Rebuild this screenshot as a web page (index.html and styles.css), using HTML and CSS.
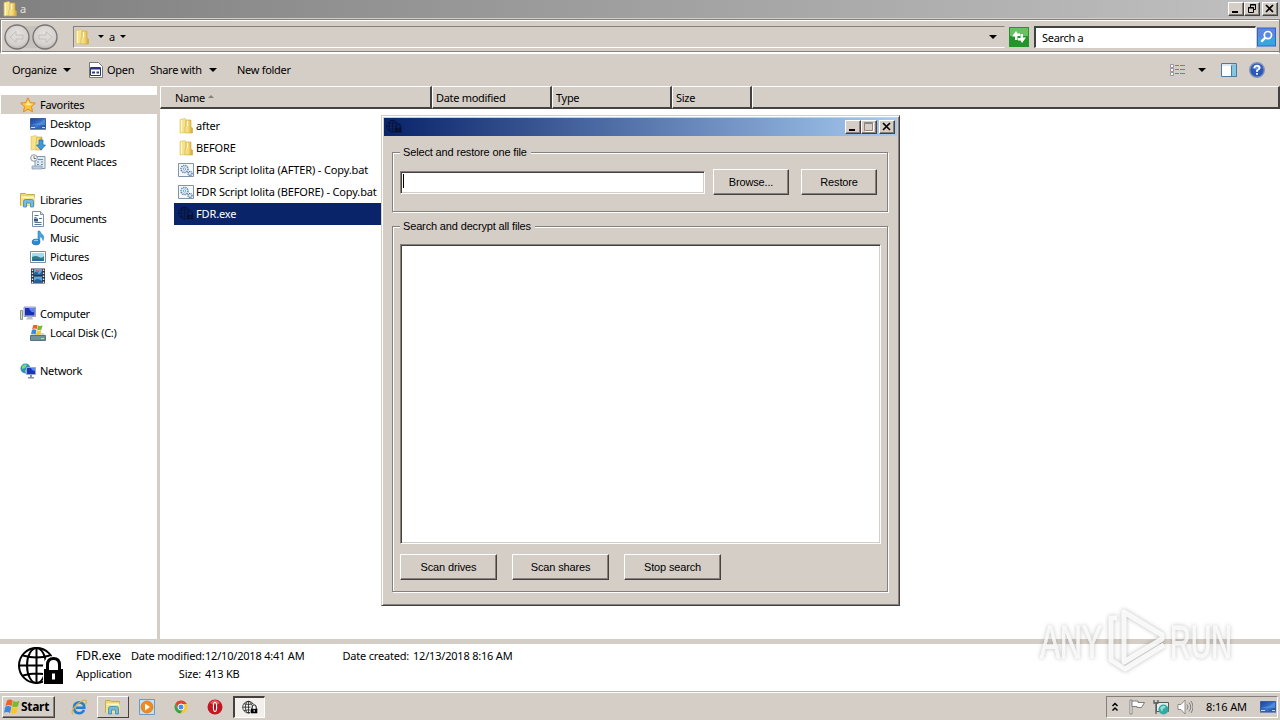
FILE: index.html
```html
<!DOCTYPE html>
<html lang="en">
<head>
    <meta charset="UTF-8">
    <meta name="viewport" content="width=device-width, initial-scale=1.0">
    <title>a</title>
    <link rel="stylesheet" href="styles.css">
</head>
<body>
    <!-- Shared icons -->
    <svg class="sprites" width="0" height="0">
        <defs>
            <linearGradient id="gold" x1="0" x2="1"><stop offset="0" stop-color="#f8e9a0"/><stop offset=".5" stop-color="#f0d570"/><stop offset="1" stop-color="#cfa631"/></linearGradient>
            <linearGradient id="blue" x1="0" y1="0" x2="1" y2="1"><stop offset="0" stop-color="#1c3f9c"/><stop offset=".6" stop-color="#3c78d0"/><stop offset="1" stop-color="#1c3f88"/></linearGradient>
            <radialGradient id="silver" cx=".5" cy=".4" r=".6"><stop offset="0" stop-color="#e8e5e1"/><stop offset=".75" stop-color="#d3d0cd"/><stop offset="1" stop-color="#b2b0ae"/></radialGradient>
        </defs>
        <symbol id="folder" viewBox="0 0 16 16">
            <path d="M2 1.500l5-1 1 1v13l-6 .5z" fill="#f5e28c" stroke="#dcbf55" stroke-width=".6"/>
            <path d="M8 2h5v7l1.500 1v5H7V9l1-1z" fill="url(#gold)" stroke="#cda93f" stroke-width=".6"/>
            <path d="M3.500 2v12M9.500 3v5" stroke="#fffbd8"/>
        </symbol>
        <symbol id="star" viewBox="0 0 16 16">
            <path d="M8 .8l2.200 4.700 5.100.6-3.800 3.500 1 5.200L8 12.200l-4.500 2.600 1-5.200L.7 6.100l5.100-.6z" fill="#fdc63d" stroke="#e08a24"/>
            <path d="M8 3.500l1.400 3 3 .4-4.400 1.600-3-1.600 2-.3z" fill="#fff0a0"/>
        </symbol>
        <symbol id="desktop" viewBox="0 0 16 16">
            <path d="M.5 2.500h15v10H.5z" fill="url(#blue)" stroke="#3a5e9c"/>
            <path d="M1 9l8-2 6-4v6z" fill="#5e9be6" opacity=".6"/>
            <path d="M0 13.500h16" stroke="#6f8db4"/>
            <path d="M1 11.500h4M12 11.500h3" stroke="#bfe0f5"/>
        </symbol>
        <symbol id="downloads" viewBox="0 0 16 16">
            <path d="M1 1.500l5-1 1 1v13l-6 .5z" fill="#f5e28c" stroke="#dcbf55" stroke-width=".6"/>
            <path d="M7 2h5v13H6V9z" fill="url(#gold)" stroke="#cda93f" stroke-width=".6"/>
            <path d="M9 5h4v5h2.500L11 15 6.500 10H9z" fill="#3c9be0" stroke="#1f69b0" stroke-width=".7"/>
        </symbol>
        <symbol id="recent" viewBox="0 0 16 16">
            <path d="M5 2.500h10v12H4l1-2z" fill="#dfe9f1" stroke="#8298ab"/>
            <path d="M8 5.500h5M7 8h2m2 0h2M7 10.500h2m2 0h2" stroke="#6e8ea9"/>
            <circle cx="4" cy="4" r="3.300" fill="#f5f7f8" stroke="#8d979f"/>
            <path d="M4 2v2.500h2" stroke="#555" fill="none" stroke-width=".8"/>
            <path d="M2 12h10v3H2z" fill="#bacddd" stroke="#8298ab" stroke-width=".7"/>
        </symbol>
        <symbol id="libraries" viewBox="0 0 16 16">
            <path d="M.5 3.500v-2h5l1 1h8v11H.5z" fill="#edd678" stroke="#c9ad48"/>
            <path d="M1.500 4.500h13v2h-13z" fill="#fff8cd"/>
            <path d="M1 6h14v8H1z" fill="#f6e18b"/>
            <path d="M3.500 15V9.500q0-2 2-2h6q2 0 2 2V15h-3v-4h-4v4z" fill="#74bbe1" stroke="#398bb8" stroke-width=".8"/>
        </symbol>
        <symbol id="document" viewBox="0 0 16 16">
            <path d="M2.500.5h8l3 3v12h-11z" fill="#fff" stroke="#7791ab"/>
            <path d="M10.500.5v3h3" fill="#d6e4ef" stroke="#7791ab"/>
            <path d="M4.500 4.500h4M4.500 6.500h2M9 7.500h3M4.500 11.500h7M4.500 13.500h7" stroke="#4f789f"/>
            <path d="M4 7.500h4v3H4z" fill="#35577f"/>
        </symbol>
        <symbol id="music" viewBox="0 0 16 16">
            <path d="M8 1h1.800q.4 2.500 3 4 1.800 1.500.2 5.500Q13 7.500 9.800 6.500V12H8z" fill="#43a5df" stroke="#287fbd" stroke-width=".6"/>
            <ellipse cx="6" cy="12" rx="4" ry="3" fill="#2d8ad2" stroke="#1f68a8" stroke-width=".6"/>
            <path d="M4 11q2-1.500 4-.5" stroke="#a9ddf7" fill="none"/>
        </symbol>
        <symbol id="picture" viewBox="0 0 16 16">
            <path d="M.5 2.500h15v11H.5z" fill="#fff" stroke="#7b8c9b"/>
            <path d="M2 4h12v8H2z" fill="#a4dbf2"/>
            <path d="M2 8q4-2 7 0t5-1v5H2z" fill="#2e8180"/>
            <path d="M2 11q5-2 12 0v1H2z" fill="#2f64a6"/>
        </symbol>
        <symbol id="video" viewBox="0 0 16 16">
            <path d="M1 .5h14v15H1z" fill="#273448"/>
            <path d="M4 1h8v6H4zM4 8.500h8V15H4z" fill="#5ba9d8"/>
            <path d="M4 5q3-3 4 0t4-2v4H4zM4 13q3-4 8 0v2H4z" fill="#28609a"/>
            <path d="M6 2h3v2H6z" fill="#c06c55"/>
            <path d="M2.500 1.500v14M13.500 1.500v14" stroke="#e8edf2" stroke-width="1.400" stroke-dasharray="1.500 1.500"/>
        </symbol>
        <symbol id="computer" viewBox="0 0 16 16">
            <path d="M.5 4.500h2v9h-2z" fill="#d9dfd1" stroke="#8b9784"/>
            <path d="M4 1h11.500v9.500H4z" fill="#c9d2e2" stroke="#7f8cab" stroke-width=".8"/>
            <path d="M5 2h9.500v7.500H5z" fill="#1b2fb4"/>
            <path d="M9 2h5.500v4q-4 1-5.500-4z" fill="#5d83ee"/>
            <path d="M8 10.500h4l1 3H6z" fill="#b9bfca"/>
        </symbol>
        <symbol id="flag" viewBox="0 0 16 16">
            <path d="M3 1.500q3-2 5.600 0L7.600 7Q5 5.200 1.500 7z" fill="#ee6128"/>
            <path d="M9.200 2q3 1.400 6.300-.2L14 7.200q-3 1.600-5.900.3z" fill="#7cb92f"/>
            <path d="M1.300 7.800q3-1.500 6 .2L6 14q-2.700-2-6-.3z" fill="#3a8ad5"/>
            <path d="M8 8.300q3 1.300 5.900-.2L12.500 13.700q-3 1.600-5.900.4z" fill="#f9c529"/>
        </symbol>
        <symbol id="disk" viewBox="0 0 16 16">
            <path d="M2.500 8h11l2 3H.5z" fill="#cbd6db"/>
            <path d="M.5 10.500h15v5H.5z" fill="#6f929e" stroke="#537480"/>
            <path d="M11 13.500h3" stroke="#8df08b"/>
            <use href="#flag" x="1" y="-1" width="12" height="12"/>
        </symbol>
        <symbol id="network" viewBox="0 0 16 16">
            <circle cx="5.500" cy="5.500" r="5" fill="#2f8fc0"/>
            <path d="M2 3q3-3 5-1l-2 3-3 1zM5 7l3 1-1 3-2-2z" fill="#7ed67c"/>
            <path d="M6.500 4.500h9v7h-9z" fill="#1b35b6" stroke="#9aabc9"/>
            <path d="M11 5h4v3q-3 0-4-3z" fill="#5e88ee"/>
            <path d="M10 12h2v2h2v1.500H8V14h2z" fill="#7e8eae"/>
        </symbol>
        <symbol id="batch" viewBox="0 0 16 16">
            <path d="M.5 1.500h15v13H.5z" fill="#f4f8fb" stroke="#7e93ac"/>
            <circle cx="6.500" cy="7" r="3.500" fill="#e6eef5" stroke="#6286ab" stroke-width="1.600" stroke-dasharray="1.300 .8"/>
            <circle cx="6.500" cy="7" r="1.200" fill="#fff" stroke="#6286ab" stroke-width=".7"/>
            <circle cx="12" cy="11.500" r="2" fill="#e6eef5" stroke="#4d739c" stroke-width="1.300" stroke-dasharray="1 .5"/>
        </symbol>
        <symbol id="globe-lock" viewBox="0 0 48 48">
            <g fill="none" stroke="currentColor" stroke-width="2">
                <circle cx="19.500" cy="21.500" r="17.500"/>
                <ellipse cx="19.500" cy="21.500" rx="9.500" ry="17.500"/>
                <path d="M19.500 4v35M2 21.500h35M6 11.500q13.500 4 27 0M6 31.500q13.500-4 27 0"/>
            </g>
            <path d="M26 42V21q2-9 10.500-9T47 21v21z" fill="var(--lock-gap, #fff)"/>
            <path d="M27 25h19v15H27z" fill="currentColor"/>
            <path d="M30.500 26v-5q0-6.500 6-6.500t6 6.500v5" fill="var(--lock-gap, #fff)" stroke="currentColor" stroke-width="3"/>
            <path d="M36.500 29.500v6" stroke="var(--lock-gap, #fff)" stroke-width="3"/>
        </symbol>
        <symbol id="win-min" viewBox="0 0 14 12"><path d="M3 8h6v2H3z" fill="#000"/></symbol>
        <symbol id="win-close" viewBox="0 0 14 12"><path d="M3 2l7 7M10 2L3 9" stroke="#000" stroke-width="1.700"/></symbol>
        <symbol id="win-restore" viewBox="0 0 14 12"><path d="M5.500 4V1.500h5v5H9M5 2h6M3.500 4.500h5v5h-5zM3 5h6" fill="none" stroke="#000"/></symbol>
        <symbol id="win-max" viewBox="0 0 14 12"><path d="M2.500 1.500h8v8h-8zM2 2.500h9" fill="none" stroke="#8d877f"/><path d="M3 10.500h8.500V2" fill="none" stroke="#fff"/></symbol>
    </svg>

    <div class="explorer">
        <div class="titlebar">
            <svg class="icon"><use href="#folder"/></svg>
            <span class="title-text">a</span>
            <div class="window-buttons">
                <span class="win-btn"><svg><use href="#win-min"/></svg></span>
                <span class="win-btn"><svg><use href="#win-restore"/></svg></span>
                <span class="win-btn close"><svg><use href="#win-close"/></svg></span>
            </div>
        </div>

        <div class="address-row">
            <svg class="nav-arrows" viewBox="0 0 56 28">
                <path d="M14 3h28v22H14z" fill="#c6c2bd"/>
                <g fill="url(#silver)" stroke="#777472" stroke-width="1.300">
                    <circle cx="14" cy="14" r="12"/>
                    <circle cx="42" cy="14" r="12"/>
                </g>
                <path d="M7 14l6-5.500v3.500h7v4h-7v3.500zM49 14l-6-5.500v3.500h-7v4h7v3.500z" fill="#dedbd7" stroke="#bdb9b5" stroke-width=".8"/>
            </svg>
            <div class="address">
                <svg class="icon"><use href="#folder"/></svg>
                <i class="caret small"></i>
                <span>a</span>
                <i class="caret small"></i>
                <i class="caret last"></i>
            </div>
            <svg class="refresh" viewBox="0 0 20 20">
                <path d="M0 0h20v20H0z" fill="#22962a"/>
                <path d="M1 1h18v8H1z" fill="#68c163"/>
                <path d="M3 9.500l4-5.500 1.500 2.500H11V9H8.500v4H6V9.500z" fill="#fff"/>
                <path d="M17 10.500l-4 5.500-1.500-2.500H9V11h2.500V7H14v3.500z" fill="#fff"/>
            </svg>
            <div class="search">Search a</div>
            <svg class="search-btn" viewBox="0 0 20 20">
                <path d="M0 0h20v20H0z" fill="#2e62ce"/>
                <path d="M1 10h18v9H1z" fill="#38a5df"/>
                <path d="M1 1h18v9q-9 4-18 0z" fill="#5c86df"/>
                <circle cx="11.500" cy="8" r="3.800" fill="#5989e2" stroke="#fff" stroke-width="1.800"/>
                <path d="M8.500 11L4.500 15" stroke="#fff" stroke-width="2.500"/>
            </svg>
        </div>

        <div class="toolbar">
            <span class="t-organize">Organize</span><i class="caret"></i>
            <svg class="icon open-icon" viewBox="0 0 16 16">
                <path d="M1.500.5h9l4 4v11h-13z" fill="#fff" stroke="#777"/>
                <path d="M2.500 5.500h10v8h-10z" fill="#fff" stroke="#26357a"/>
                <path d="M3 6.500h9" stroke="#26357a" stroke-width="2"/>
                <path d="M4 10.500h3M8.500 10.500h2.500" stroke="#333b7c" stroke-width="2"/>
            </svg>
            <span class="t-open">Open</span>
            <span class="t-share">Share with</span><i class="caret"></i>
            <span class="t-new">New folder</span>
            <div class="tools">
                <svg class="icon" viewBox="0 0 16 16">
                    <path d="M1.500 2.500h3v3h-3zM1.500 6.500h3v3h-3zM1.500 10.500h3v3h-3z" fill="#fff" stroke="#81868d" stroke-width=".8"/>
                    <path d="M6 3.500h4m1 0h5M6 7.500h4m1 0h5M6 11.500h4m1 0h5" stroke="#68829f"/>
                </svg>
                <i class="caret"></i>
                <svg class="icon preview-icon" viewBox="0 0 16 16">
                    <path d="M.5 1.500h15v13H.5z" fill="#fff" stroke="#4d799e"/>
                    <path d="M10.500 3v11.500h5V3z" fill="#84c7e4" stroke="#4d799e"/>
                    <path d="M1 3h14" stroke="#b8d3e5"/>
                </svg>
                <svg class="icon" viewBox="0 0 16 16">
                    <circle cx="8" cy="8" r="7.300" fill="#2e58b5" stroke="#8494b8" stroke-width="1.400"/>
                    <path d="M3 6q5-6 10 0-5 3-10 0z" fill="#6d94df"/>
                    <path d="M5.500 6q0-2.400 2.500-2.400T10.500 6Q10.500 7.300 8 8.500v1.500" fill="none" stroke="#fff" stroke-width="1.700"/>
                    <path d="M7.100 11h1.800v1.800H7.100z" fill="#fff"/>
                </svg>
            </div>
        </div>

        <div class="content">
            <div class="nav-pane">
                <div class="nav-item root selected"><svg class="icon"><use href="#star"/></svg><span>Favorites</span></div>
                <div class="nav-item"><svg class="icon"><use href="#desktop"/></svg><span>Desktop</span></div>
                <div class="nav-item"><svg class="icon"><use href="#downloads"/></svg><span>Downloads</span></div>
                <div class="nav-item"><svg class="icon"><use href="#recent"/></svg><span>Recent Places</span></div>
                <div class="nav-item root group"><svg class="icon"><use href="#libraries"/></svg><span>Libraries</span></div>
                <div class="nav-item"><svg class="icon"><use href="#document"/></svg><span>Documents</span></div>
                <div class="nav-item"><svg class="icon"><use href="#music"/></svg><span>Music</span></div>
                <div class="nav-item"><svg class="icon"><use href="#picture"/></svg><span>Pictures</span></div>
                <div class="nav-item"><svg class="icon"><use href="#video"/></svg><span>Videos</span></div>
                <div class="nav-item root group"><svg class="icon"><use href="#computer"/></svg><span>Computer</span></div>
                <div class="nav-item"><svg class="icon"><use href="#disk"/></svg><span>Local Disk (C:)</span></div>
                <div class="nav-item root group"><svg class="icon"><use href="#network"/></svg><span>Network</span></div>
            </div>
            <div class="file-pane">
                <div class="columns">
                    <div class="col name">Name <i class="sort"></i></div>
                    <div class="col date">Date modified</div>
                    <div class="col type">Type</div>
                    <div class="col size">Size</div>
                    <div class="col rest"></div>
                </div>
                <div class="files">
                    <div class="file"><svg class="icon"><use href="#folder"/></svg><span>after</span></div>
                    <div class="file"><svg class="icon"><use href="#folder"/></svg><span>BEFORE</span></div>
                    <div class="file"><svg class="icon"><use href="#batch"/></svg><span>FDR Script lolita (AFTER) - Copy.bat</span></div>
                    <div class="file"><svg class="icon"><use href="#batch"/></svg><span>FDR Script lolita (BEFORE) - Copy.bat</span></div>
                    <div class="file selected"><svg class="icon dark-icon"><use href="#globe-lock"/></svg><span>FDR.exe</span></div>
                </div>
            </div>
        </div>

        <div class="details">
            <svg class="big-icon"><use href="#globe-lock"/></svg>
            <div class="detail-grid">
                <span class="file-name">FDR.exe</span>
                <span class="label">Date modified:</span><span>12/10/2018 4:41 AM</span>
                <span class="label">Date created:</span><span>12/13/2018 8:16 AM</span>
                <span class="kind">Application</span>
                <span class="label">Size:</span><span>413 KB</span>
            </div>
        </div>
    </div>

    <div class="taskbar">
        <div class="start"><svg class="icon"><use href="#flag"/></svg><span>Start</span></div>
        <div class="task">
            <svg class="icon" viewBox="0 0 16 16">
                <path d="M13 11q-1.500 3.300-5 3.300-5-.5-5-5.500t5-5.500q5.500.5 5.300 5.500H5" fill="none" stroke="#2380d0" stroke-width="2.600"/>
                <path d="M2 15.300Q-1 13 5.500 6 13-.5 15 1.500q1 1-.5 4" fill="none" stroke="#e0b13a" stroke-width="1.200"/>
            </svg>
        </div>
        <div class="task open"><svg class="icon"><use href="#libraries"/></svg></div>
        <div class="task">
            <svg class="icon" viewBox="0 0 16 16">
                <path d="M.5.5h15v15H.5z" fill="#c6dff3" stroke="#659bca"/>
                <circle cx="8" cy="8" r="6" fill="#f28a1b" stroke="#d56c12" stroke-width=".6"/>
                <path d="M6 4.500l5 3.500-5 3.500z" fill="#fff"/>
            </svg>
        </div>
        <div class="task">
            <svg class="icon" viewBox="0 0 16 16">
                <circle cx="8" cy="8" r="6.500" fill="#f7ca35"/>
                <path d="M2.400 4.700A6.500 6.500 0 0 1 13.800 5H8L5 9z" fill="#dc4437"/>
                <path d="M2.400 4.700A6.500 6.500 0 0 0 7.500 14.500L10.500 9.500 5 9.500z" fill="#36a354"/>
                <circle cx="8" cy="8" r="3" fill="#4b8bee" stroke="#fff"/>
            </svg>
        </div>
        <div class="task">
            <svg class="icon" viewBox="0 0 16 16">
                <circle cx="8" cy="8" r="7.500" fill="#c41520"/>
                <path d="M3 4q5-6 10 0-5 4-10 0z" fill="#e45b60"/>
                <ellipse cx="8" cy="8" rx="2.200" ry="5" fill="#fff"/>
                <ellipse cx="8" cy="8" rx="1" ry="4" fill="#9d0e17"/>
            </svg>
        </div>
        <div class="task active"><svg class="icon"><use href="#globe-lock"/></svg></div>

        <div class="tray">
            <svg class="chevrons" viewBox="0 0 8 10"><path d="M1.500 4L4 1.500 6.500 4M1.500 8.500L4 6l2.500 2.500" fill="none" stroke="#000" stroke-width="1.500"/></svg>
            <svg class="icon" viewBox="0 0 16 16">
                <path d="M1 1h2v14H1z" fill="#fff" stroke="#72706d" stroke-width=".8"/>
                <path d="M3 2h6v1.500h6.500l-3 5H8V7.500H3z" fill="#fff" stroke="#72706d" stroke-width=".9"/>
            </svg>
            <svg class="icon net-icon" viewBox="0 0 16 16">
                <path d="M3.500 3.500h12v9h-12z" fill="#e5edf0" stroke="#575a5c"/>
                <path d="M1 1v3h4V1M3 4v11" fill="none" stroke="#575a5c" stroke-width="1.300"/>
                <circle cx="10.500" cy="10.500" r="5" fill="#34a8a5"/>
                <path d="M7 9q3-4 6-1l-3 2-1 3z" fill="#91e2cb"/>
            </svg>
            <svg class="icon" viewBox="0 0 16 16">
                <path d="M1 5.500h3L8 1v14l-4-4.500H1z" fill="#fff" stroke="#777" stroke-width=".8"/>
                <path d="M10 5.500q2 2.500 0 5M12 3.500q3.500 4.500 0 9M14 2q4 6 0 12" fill="none" stroke="#777" stroke-width=".9"/>
            </svg>
            <span class="clock">8:16 AM</span>
            <svg class="icon"><use href="#desktop"/></svg>
        </div>
    </div>

    <div class="dialog">
        <div class="dialog-title">
            <svg class="icon dark-icon"><use href="#globe-lock"/></svg>
            <div class="window-buttons">
                <span class="win-btn"><svg><use href="#win-min"/></svg></span>
                <span class="win-btn"><svg><use href="#win-max"/></svg></span>
                <span class="win-btn close"><svg><use href="#win-close"/></svg></span>
            </div>
        </div>
        <fieldset class="group-one">
            <legend>Select and restore one file</legend>
            <div class="restore-row">
                <div class="text-input"><i class="cursor"></i></div>
                <button class="btn browse">Browse...</button>
                <button class="btn">Restore</button>
            </div>
        </fieldset>
        <fieldset class="group-all">
            <legend>Search and decrypt all files</legend>
            <div class="list-box"></div>
            <div class="scan-row">
                <button class="btn">Scan drives</button>
                <button class="btn">Scan shares</button>
                <button class="btn">Stop search</button>
            </div>
        </fieldset>
    </div>

    <svg class="watermark" viewBox="0 0 220 72">
        <text x="5" y="54" textLength="62" lengthAdjust="spacingAndGlyphs">ANY</text>
        <g class="watermark-logo">
            <path d="M89 8L127 31V35L89 58z"/>
            <path d="M82 14H76V56L90 65 129 41"/>
        </g>
        <text x="135" y="54" textLength="62" lengthAdjust="spacingAndGlyphs">RUN</text>
    </svg>
</body>
</html>
```
FILE: styles.css
```css
:root {
    --face: #d5cec7;
    --shadow: #85807b;
    --dark: #45413e;
    --navy: #0a246a;
}

* {
    box-sizing: border-box;
}

body {
    margin: 0;
    width: 1280px;
    height: 720px;
    overflow: hidden;
    position: relative;
    display: flex;
    flex-direction: column;
    background: var(--face);
    color: #000;
    font: 11px/14px "Noto Sans", sans-serif;
    letter-spacing: -0.3px;
    white-space: nowrap;
}

.sprites {
    position: absolute;
}

.icon {
    width: 16px;
    height: 16px;
    flex: none;
}

.explorer {
    height: 692px;
    display: flex;
    flex-direction: column;
}

/* Title bars */
.titlebar {
    height: 18px;
    display: flex;
    align-items: center;
    padding: 0 2px;
    gap: 2px;
    background: linear-gradient(90deg, #808080, #c0c0c0);
    color: #e4e0db;
}

.window-buttons {
    display: flex;
    margin-left: auto;
}

.win-btn {
    width: 16px;
    height: 14px;
    background: var(--face);
    border: 1px solid;
    border-color: #fff var(--dark) var(--dark) #fff;
    box-shadow: inset -1px -1px var(--shadow);
}

.win-btn svg {
    display: block;
    width: 14px;
    height: 12px;
}

.win-btn.close {
    margin-left: 2px;
}

/* Address bar */
.address-row {
    height: 35px;
    margin-top: 1px;
    display: flex;
    align-items: center;
    padding: 1px 1px 0 3px;
    border: 1px solid var(--shadow);
    border-bottom: 2px solid;
    border-bottom-color: #fff;
    box-shadow: inset 1px 1px #fff, inset 0 -1px var(--shadow);
}

.nav-arrows {
    width: 56px;
    height: 28px;
    margin-left: -1px;
}

.address {
    width: 932px;
    height: 22px;
    margin-left: 14px;
    display: flex;
    align-items: center;
    border: 1px solid;
    border-color: var(--shadow) var(--face) #fff var(--shadow);
}

.address span {
    margin: 0 5px;
}

.caret {
    width: 0;
    height: 0;
    border: 4px solid transparent;
    border-top-color: #000;
    border-bottom: 0;
}

.caret.small {
    border-width: 3px 3px 0;
}

.address .icon + .caret {
    margin-left: 8px;
}

.caret.last {
    margin-left: auto;
    margin-right: 7px;
}

.refresh {
    width: 20px;
    height: 20px;
    margin: 0 5px 0 4px;
}

.search {
    width: 222px;
    height: 22px;
    padding: 3px 6px;
    background: #fff;
    border: 2px solid;
    border-color: var(--dark) #fff #fff var(--dark);
    border-width: 2px 1px 1px 2px;
}

.search-btn {
    width: 19px;
    height: 20px;
    margin-left: 1px;
}

/* Command bar */
.toolbar {
    height: 32px;
    display: flex;
    align-items: center;
    padding: 0 15px 1px 12px;
}

.t-organize {
    width: 51px;
}

.open-icon {
    margin: 0 3px 0 17px;
}

.t-open {
    width: 43px;
}

.t-share {
    width: 59px;
}

.t-new {
    margin-left: 20px;
}

.tools {
    display: flex;
    align-items: center;
    margin-left: auto;
}

.tools .caret {
    margin-left: 13px;
}

.tools .preview-icon {
    margin: 0 12px 0 15px;
}

/* Navigation and files */
.content {
    height: 553px;
    display: flex;
    background: #fff;
}

.nav-pane {
    width: 160px;
    padding-top: 9px;
    border-right: 3px solid var(--face);
}

.nav-item {
    height: 19px;
    display: flex;
    align-items: center;
    gap: 4px;
    padding-left: 30px;
}

.nav-item.root {
    padding-left: 20px;
}

.nav-item.group {
    margin-top: 19px;
}

.nav-item.selected {
    margin-left: 1px;
    padding-left: 19px;
    background: var(--face);
}

.file-pane {
    flex: 1;
}

.columns {
    height: 23px;
    display: flex;
}

.col {
    width: 120px;
    padding: 4px 3px 0;
    background: var(--face);
    border: 1px solid;
    border-width: 1px 2px 2px 1px;
    border-color: #fff var(--dark) var(--dark) #fff;
}

.col.name {
    width: 272px;
    padding-left: 14px;
}

.col.size {
    width: 80px;
}

.col.rest {
    flex: 1;
}

.sort {
    display: inline-block;
    vertical-align: 4px;
    margin-left: 1px;
    border: 3px solid transparent;
    border-top: 0;
    border-bottom-color: var(--shadow);
}

.files {
    padding: 6px 0 0 14px;
    letter-spacing: -0.13px;
}

.file {
    width: 250px;
    height: 22px;
    display: flex;
    align-items: center;
    gap: 2px;
    padding-left: 4px;
}

.file.selected {
    background: var(--navy);
    color: #fff;
}

.dark-icon {
    color: #06112f;
    --lock-gap: #0a246a;
}

/* Details pane */
.details {
    height: 53px;
    display: flex;
    background: #fff;
    border-top: 5px solid var(--face);
    border-bottom: 1px solid #bbb6ae;
}

.big-icon {
    width: 48px;
    height: 48px;
    margin: 0 11px 0 17px;
}

.detail-grid {
    display: grid;
    grid-template-columns: 55px 74px 136px 72px 110px;
    grid-template-rows: 18px 18px;
    padding-top: 5px;
    align-items: start;
    letter-spacing: -0.2px;
}

.file-name {
    font-size: 12px;
    letter-spacing: 0;
}

.label {
    text-align: right;
    padding-right: 4px;
}

/* Taskbar */
.taskbar {
    height: 28px;
    display: flex;
    align-items: center;
    border-top: 1px solid #fff;
    padding: 1px 2px 0;
}

.start {
    width: 53px;
    height: 22px;
    display: flex;
    align-items: center;
    gap: 1px;
    padding-left: 1px;
    font-weight: bold;
    font-size: 12px;
    border: 1px solid;
    border-color: #fff var(--dark) var(--dark) #fff;
    box-shadow: inset -1px -1px var(--shadow);
    margin-right: 8px;
}

.task {
    width: 32px;
    height: 22px;
    margin-right: 2px;
    display: flex;
    align-items: center;
    justify-content: center;
}

.task.open,
.task.active {
    border: 1px solid;
    border-color: #fff var(--dark) var(--dark) #fff;
}

.task.active {
    background: #f3f0ec;
    border-width: 2px 1px 1px 2px;
    border-color: var(--dark) #fff #fff var(--dark);
}

.tray {
    width: 172px;
    height: 22px;
    margin-left: auto;
    display: flex;
    align-items: center;
    padding: 0 1px 0 4px;
    border: 1px solid;
    border-color: var(--shadow) #fff #fff var(--shadow);
}

.chevrons {
    width: 8px;
    height: 10px;
    margin-right: 10px;
}

.net-icon {
    margin: 0 8px;
}

.clock {
    margin: 0 auto;
    letter-spacing: -0.1px;
}

/* Decryptor window */
.dialog {
    position: absolute;
    left: 381px;
    top: 115px;
    width: 519px;
    height: 491px;
    padding: 2px;
    background: var(--face);
    border: 1px solid;
    border-color: var(--face) var(--dark) var(--dark) var(--face);
    box-shadow: inset 1px 1px #fff, inset -1px -1px var(--shadow);
    font-family: "Liberation Sans", sans-serif;
    letter-spacing: -0.15px;
}

.dialog-title {
    height: 18px;
    display: flex;
    align-items: center;
    padding: 0 2px;
    background: linear-gradient(90deg, #0a246a, #a6caf0);
}

.dialog fieldset {
    margin: 0 9px 0 8px;
    padding: 0 6px 0 7px;
    border: 1px solid var(--shadow);
    box-shadow: 1px 1px #fff, inset 1px 1px #fff;
    min-width: 0;
}

.dialog legend {
    margin-left: 0;
    padding: 0 4px 0 3px;
    height: 14px;
    background: var(--face);
}

.dialog .group-one {
    height: 67px;
    margin-top: 9px;
}

.dialog .group-all {
    height: 373px;
    margin-top: 7px;
}

.restore-row {
    display: flex;
    align-items: center;
    margin-top: 10px;
}

.text-input {
    width: 305px;
    height: 23px;
    margin-right: 8px;
    padding: 1px;
}

.text-input,
.list-box {
    background: #fff;
    border: 1px solid;
    border-color: var(--shadow) #fff #fff var(--shadow);
    box-shadow: inset 1px 1px var(--dark), inset -1px -1px var(--face);
}

.cursor {
    display: block;
    width: 1px;
    height: 14px;
    margin: 1px;
    background: #000;
}

.btn {
    width: 76px;
    height: 26px;
    padding: 0;
    background: var(--face);
    border: 1px solid;
    border-color: #fff var(--dark) var(--dark) #fff;
    box-shadow: inset -1px -1px var(--shadow);
    font: inherit;
    letter-spacing: inherit;
    color: #000;
}

.btn.browse {
    margin-right: 12px;
}

.list-box {
    height: 300px;
    width: 481px;
    margin-top: 11px;
}

.scan-row {
    display: flex;
    gap: 15px;
    margin-top: 10px;
}

.scan-row .btn {
    width: 97px;
}

/* Watermark over the desktop */
.watermark {
    position: absolute;
    left: 1035px;
    top: 604px;
    width: 220px;
    height: 72px;
    filter: drop-shadow(0 0 2px rgba(0, 0, 0, 0.3));
}

.watermark text {
    font: 46px "Liberation Sans", sans-serif;
    letter-spacing: 0;
    fill: #fff;
    stroke: #fff;
    stroke-width: 1px;
    opacity: 0.8;
}

.watermark-logo {
    fill: none;
    stroke: #fff;
    stroke-width: 5px;
    stroke-linejoin: round;
    opacity: 0.85;
}
```
